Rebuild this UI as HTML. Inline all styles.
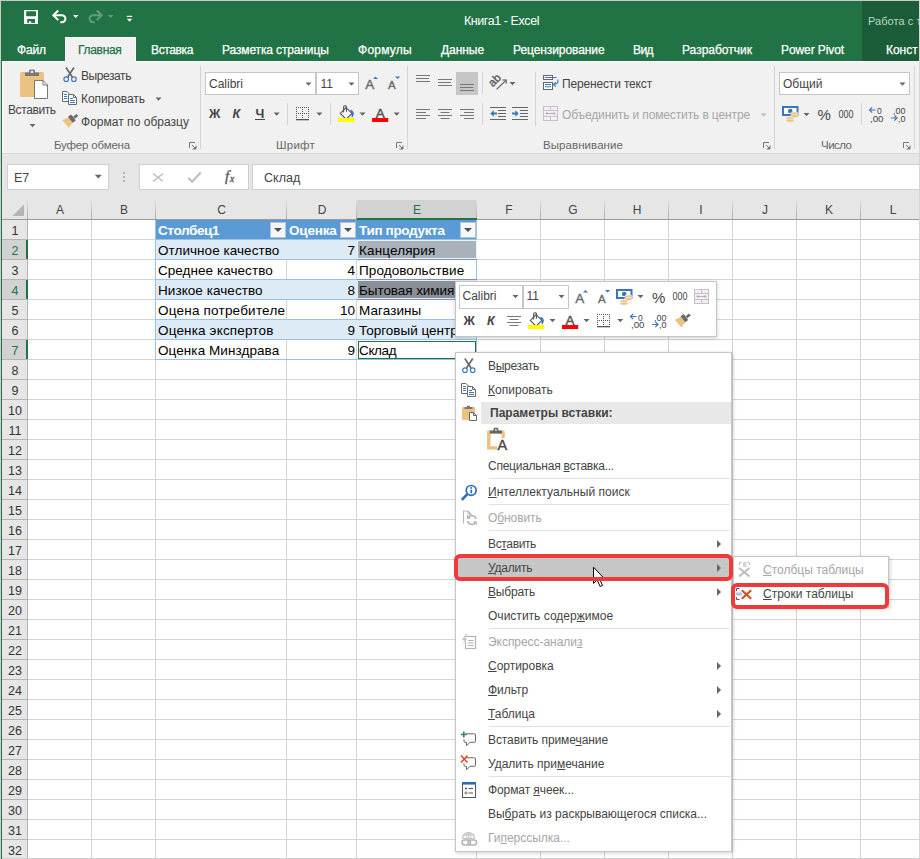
<!DOCTYPE html>
<html lang="ru"><head><meta charset="utf-8"><title>Книга1 - Excel</title>
<style>
*{box-sizing:border-box;margin:0;padding:0}
html,body{width:920px;height:859px;overflow:hidden;background:#fff}
body{font-family:"Liberation Sans",sans-serif;font-size:12px;color:#444;position:relative}
#app{position:absolute;left:0;top:0;width:920px;height:859px;overflow:hidden;background:#fff}
.a{position:absolute}
.t{position:absolute;white-space:nowrap;line-height:16px;height:16px}
.ui{font-size:12px;color:#444}
.w{color:#fff}
.tab{font-size:12px;color:#fff;-webkit-text-stroke:0.25px}
.grp{color:#666;font-size:11.5px}
.dis{color:#a6a6a6}
.cell{font-size:13.5px;color:#000;line-height:20px;height:20px}
.hdr{font-size:12px;color:#333;line-height:20px;height:20px;text-align:center}
.sep{position:absolute;width:1px;background:#d8d8d8}
.combo{position:absolute;background:#fff;border:1px solid #c6c6c6}
.arr{position:absolute;width:0;height:0;border-left:3px solid transparent;border-right:3px solid transparent;border-top:3px solid #666}
.mi{position:absolute;left:488px;font-size:12px;color:#444;white-space:nowrap;line-height:16px;height:16px}
.msep{position:absolute;left:489px;width:241px;height:1px;background:#e1e1e1}
.marr{position:absolute;left:717px;width:0;height:0;border-top:4px solid transparent;border-bottom:4px solid transparent;border-left:4px solid #666}
u{text-decoration:underline;text-underline-offset:1px}
</style></head>
<body><div id="app">
<div class="a" style="left:0px;top:0px;width:920px;height:61px;background:#217346;"></div>
<div class="a" style="left:862px;top:1px;width:58px;height:60px;background:#1a5d38;"></div>
<svg class="a" style="left:23px;top:9px" width="16" height="16" viewBox="0 0 16 16"><rect x="1" y="1" width="14" height="14" rx="0.600" fill="#fff"/><path d="M3.200 2.300h9.800v4l-0.800 0.900h-8.200l-0.800-0.900z" fill="#217346"/><rect x="4.200" y="10" width="7.800" height="3.900" fill="#217346"/><rect x="6.100" y="12.200" width="2" height="1.900" fill="#fff"/></svg>
<svg class="a" style="left:50px;top:7px" width="20" height="20" viewBox="0 0 20 20"><path d="M3.500 8.300h8.400a3.500 3.500 0 0 1 0 7h-1.600" fill="none" stroke="#fff" stroke-width="2"/><path d="M8.200 3.500l-4.800 4.800 4.800 4.800" fill="none" stroke="#fff" stroke-width="2"/></svg>
<svg class="a" style="left:72px;top:14px" width="8" height="5" viewBox="0 0 8 5"><path d="M1 1h5.400l-2.700 3z" fill="#fff"/></svg>
<svg class="a" style="left:85px;top:7px" width="20" height="20" viewBox="0 0 20 20"><g opacity="0.300"><path d="M16.500 8.300h-8.400a3.500 3.500 0 0 0 0 7h1.600" fill="none" stroke="#fff" stroke-width="2"/><path d="M11.800 3.500l4.800 4.800-4.800 4.800" fill="none" stroke="#fff" stroke-width="2"/></g></svg>
<svg class="a" style="left:107px;top:14px" width="8" height="5" viewBox="0 0 8 5"><path d="M1 1h5.400l-2.700 3z" fill="#fff" opacity="0.300"/></svg>
<svg class="a" style="left:126px;top:15px" width="8" height="8" viewBox="0 0 8 8"><rect x="0.800" y="0.800" width="5.400" height="1.200" fill="#fff"/><path d="M0.800 3.700h5.400l-2.700 3z" fill="#fff"/></svg>
<div class="t w" style="left:464px;top:13px;font-size:12.5px;letter-spacing:-0.431px;">Книга1 - Excel</div>
<div class="t w" style="left:868px;top:13px;font-size:11px;color:#bdd5c6;letter-spacing:0.055px;">Работа с т</div>
<div class="a" style="left:65px;top:37px;width:71px;height:24px;background:#f1f1f1;border:1px solid #fdfbfc;border-bottom:0"></div>
<div class="t tab" style="left:17px;top:41.5px;color:#fff;letter-spacing:-0.129px;">Файл</div>
<div class="t tab" style="left:78px;top:41.5px;color:#217346;letter-spacing:-0.312px;">Главная</div>
<div class="t tab" style="left:151px;top:41.5px;color:#fff;letter-spacing:-0.373px;">Вставка</div>
<div class="t tab" style="left:222px;top:41.5px;color:#fff;letter-spacing:-0.128px;">Разметка страницы</div>
<div class="t tab" style="left:358px;top:41.5px;color:#fff;letter-spacing:0.254px;">Формулы</div>
<div class="t tab" style="left:441px;top:41.5px;color:#fff;letter-spacing:-0.060px;">Данные</div>
<div class="t tab" style="left:513px;top:41.5px;color:#fff;letter-spacing:-0.084px;">Рецензирование</div>
<div class="t tab" style="left:633px;top:41.5px;color:#fff;letter-spacing:-0.573px;">Вид</div>
<div class="t tab" style="left:682px;top:41.5px;color:#fff;letter-spacing:0.001px;">Разработчик</div>
<div class="t tab" style="left:781px;top:41.5px;color:#fff;letter-spacing:-0.094px;">Power Pivot</div>
<div class="t tab" style="left:886px;top:41.5px;color:#fff;letter-spacing:-0.039px;">Конст</div>
<div class="a" style="left:1px;top:61px;width:919px;height:92px;background:#f1f1f1;"></div>
<div class="a" style="left:2px;top:61px;width:63px;height:1px;background:#fdfbfc;"></div>
<div class="a" style="left:136px;top:61px;width:783px;height:1px;background:#fdfbfc;"></div>
<div class="a" style="left:2px;top:61px;width:1px;height:92px;background:#fdfbfc;"></div>
<div class="a" style="left:66px;top:60px;width:69px;height:2px;background:#f1f1f1;"></div>
<div class="a" style="left:200px;top:66px;width:1px;height:83px;background:#d4d4d4;"></div>
<div class="a" style="left:407px;top:66px;width:1px;height:83px;background:#d4d4d4;"></div>
<div class="a" style="left:774px;top:66px;width:1px;height:83px;background:#d4d4d4;"></div>
<div class="a" style="left:914px;top:66px;width:1px;height:83px;background:#d4d4d4;"></div>
<div class="a" style="left:535px;top:72px;width:1px;height:54px;background:#d4d4d4;"></div>
<div class="t ui" style="left:8px;top:102px;;letter-spacing:-0.397px;">Вставить</div>
<div class="t ui" style="left:81px;top:68px;;letter-spacing:-0.422px;">Вырезать</div>
<div class="t ui" style="left:81px;top:91px;;letter-spacing:-0.062px;">Копировать</div>
<div class="t ui" style="left:81px;top:114px;;letter-spacing:0.023px;">Формат по образцу</div>
<div class="t grp" style="left:54px;top:137px;;letter-spacing:-0.180px;">Буфер обмена</div>
<div class="combo" style="left:205px;top:72px;width:111px;height:23px"></div><div class="combo" style="left:316px;top:72px;width:43px;height:23px"></div><div class="t ui" style="left:209px;top:76px;;">Calibri</div>
<div class="t ui" style="left:320.5px;top:76px;;">11</div>
<div class="t grp" style="left:276px;top:137px;;letter-spacing:0.231px;">Шрифт</div>
<div class="a" style="left:456px;top:72px;width:22px;height:23px;background:#c6c6c6;"></div>
<div class="t ui" style="left:562px;top:76px;;letter-spacing:-0.160px;">Перенести текст</div>
<div class="t ui dis" style="left:562px;top:107px;;letter-spacing:-0.124px;">Объединить и поместить в центре</div>
<div class="t grp" style="left:543px;top:137px;;letter-spacing:0.069px;">Выравнивание</div>
<div class="combo" style="left:779px;top:72px;width:131px;height:23px"></div><div class="t ui" style="left:783px;top:76px;;">Общий</div>
<div class="t grp" style="left:821px;top:137px;;letter-spacing:-0.536px;">Число</div>
<svg class="a" style="left:0;top:0" width="920" height="160" viewBox="0 0 920 160"><rect x="20" y="72" width="24" height="25" rx="1.5" fill="#eac282"/><path d="M25 76v-3.5h4v-1.6a1.4 1.4 0 0 1 1.4-1.4h3.2a1.4 1.4 0 0 1 1.4 1.4v1.6h4v3.5z" fill="#777"/><rect x="30.8" y="70.8" width="2.4" height="2.2" fill="#f1f1f1"/><path d="M34.5 80.5h8.5l4.5 4.5v13.5h-13z" fill="#fff" stroke="#777" stroke-width="1"/><path d="M43 80.5v4.5h4.5" fill="none" stroke="#777" stroke-width="1"/><path d="M29.5 124.0h6l-3 3.2z" fill="#666"/><path d="M66 67.5l6.3 9.5M74 67.5l-6.3 9.5" stroke="#6a6a6a" stroke-width="1.7" fill="none"/><circle cx="66.2" cy="79.2" r="2.3" fill="none" stroke="#3a76c0" stroke-width="1.1"/><circle cx="73.9" cy="79.2" r="2.3" fill="none" stroke="#3a76c0" stroke-width="1.1"/><path d="M62.5 91.5h4.5l2.5 2.5v7.5h-7z" fill="#fff" stroke="#6a6a6a" stroke-width="1"/><path d="M64 94.5h3M64 96.5h3M64 98.5h3" stroke="#3a76c0" stroke-width="1"/><path d="M68.5 94.5h5l3 3v7h-8z" fill="#fff" stroke="#6a6a6a" stroke-width="1"/><path d="M73.5 94.5v3h3" fill="none" stroke="#6a6a6a" stroke-width="1"/><path d="M70 98.5h3M70 100.5h5M70 102.5h5" stroke="#3a76c0" stroke-width="1"/><path d="M155.5 97.5h6l-3 3.2z" fill="#666"/><path d="M62.3 120.2l6.2-3 4.2 5.6-4 5z" fill="#eac282"/><path d="M68 116.8l3.2-2.4 4.6 6-3.2 2.4z" fill="#6a6a6a"/><path d="M73.2 116.6l3.4-2.6 1.6 2.1-3.4 2.6z" fill="#6a6a6a"/><path d="M189.5 148v-5.5h5.5" fill="none" stroke="#777" stroke-width="1"/><path d="M192 145l3.5 3.5M196 145.5v3.5h-3.5" fill="none" stroke="#777" stroke-width="1"/><rect x="194" y="147" width="2" height="2" fill="#777"/><path d="M305.5 82.5h6l-3 3.2z" fill="#666"/><path d="M348.5 82.5h6l-3 3.2z" fill="#666"/><text x="365.300" y="88.800" font-family="Liberation Sans,sans-serif" font-size="13.5" fill="#6a6a6a" stroke="#6a6a6a" stroke-width="0.400">A</text><path d="M373 79l2.5-2.6 2.5 2.6z" fill="#3a76c0"/><text x="388" y="88.800" font-family="Liberation Sans,sans-serif" font-size="11.5" fill="#6a6a6a" stroke="#6a6a6a" stroke-width="0.400">A</text><path d="M395 76.4h5.2l-2.6 2.6z" fill="#3a76c0"/><text x="209" y="118" font-family="Liberation Sans,sans-serif" font-size="12.5" font-weight="bold" fill="#444">Ж</text><text x="232.5" y="118" font-family="Liberation Sans,sans-serif" font-size="12.5" font-weight="bold" font-style="italic" fill="#444">К</text><text x="255.5" y="118" font-family="Liberation Sans,sans-serif" font-size="12.5" font-weight="bold" fill="#444">Ч</text><rect x="255" y="119" width="10" height="1" fill="#444"/><path d="M273.7 112.5h6l-3 3.2z" fill="#666"/><rect x="287" y="103" width="1" height="22" fill="#d4d4d4"/><rect x="330" y="103" width="1" height="22" fill="#d4d4d4"/><path d="M296.5 107v12M302.5 107v12M308.5 107v12M296 107.5h13M296 113.5h13" stroke="#555" stroke-width="1" stroke-dasharray="1 1" fill="none"/><rect x="296" y="119" width="13" height="1.3" fill="#555"/><path d="M316.4 112.5h6l-3 3.2z" fill="#666"/><path d="M346.1 107.6l5.800 5.800-5.800 5.800-5.800-5.800z" fill="#fff" stroke="#555" stroke-width="1.100"/><path d="M343.6 112.5v-5.300a1.400 1.400 0 0 1 2.800 -0.200v4.700" fill="none" stroke="#555" stroke-width="1.100"/><path d="M351.2 109.8c2.800 1.600 3.600 4.400 1.200 7.600l-0.900-0.200c0.600-3-0.100-4.800-1.700-6.200z" fill="#3a76c0"/><rect x="338" y="118" width="16.200" height="4" fill="#ffff00"/><path d="M359.5 112.5h6l-3 3.2z" fill="#666"/><text x="375.800" y="117.800" font-family="Liberation Sans,sans-serif" font-size="13.5" fill="#555" stroke="#555" stroke-width="0.500">A</text><rect x="372" y="118" width="16.200" height="4" fill="#ff0000"/><path d="M393.7 112.5h6l-3 3.2z" fill="#666"/><path d="M396.5 148v-5.5h5.5" fill="none" stroke="#777" stroke-width="1"/><path d="M399 145l3.5 3.5M403 145.5v3.5h-3.5" fill="none" stroke="#777" stroke-width="1"/><rect x="401" y="147" width="2" height="2" fill="#777"/><rect x="416" y="75" width="14" height="1" fill="#777"/><rect x="416" y="78" width="13" height="1" fill="#777"/><rect x="416" y="81" width="14" height="1" fill="#777"/><rect x="438" y="79" width="14" height="1" fill="#777"/><rect x="438" y="82" width="13" height="1" fill="#777"/><rect x="438" y="85" width="14" height="1" fill="#777"/><rect x="460" y="84" width="14" height="1" fill="#777"/><rect x="460" y="87" width="13" height="1" fill="#777"/><rect x="460" y="90" width="14" height="1" fill="#777"/><rect x="416" y="109" width="14" height="1" fill="#777"/><rect x="416" y="112" width="10" height="1" fill="#777"/><rect x="416" y="115" width="14" height="1" fill="#777"/><rect x="416" y="118" width="10" height="1" fill="#777"/><rect x="438" y="109" width="14" height="1" fill="#777"/><rect x="440.5" y="112" width="9" height="1" fill="#777"/><rect x="438" y="115" width="14" height="1" fill="#777"/><rect x="440.5" y="118" width="9" height="1" fill="#777"/><rect x="460" y="109" width="14" height="1" fill="#777"/><rect x="464" y="112" width="10" height="1" fill="#777"/><rect x="460" y="115" width="14" height="1" fill="#777"/><rect x="464" y="118" width="10" height="1" fill="#777"/><rect x="482" y="72" width="1" height="22" fill="#d4d4d4"/><rect x="482" y="103" width="1" height="22" fill="#d4d4d4"/><text transform="translate(492.800 87.400) rotate(-45)" font-family="Liberation Sans,sans-serif" font-size="11.5" fill="#4a4a4a" stroke="#4a4a4a" stroke-width="0.250">ab</text><path d="M496.600 89.300l9-8.600" stroke="#555" stroke-width="1.1" fill="none"/><path d="M502.400 80h3.800v3.800" stroke="#555" stroke-width="1.1" fill="none"/><path d="M509.5 82.0h6l-3 3.2z" fill="#666"/><rect x="543.5" y="75.500" width="9" height="4" fill="#fff" stroke="#666" stroke-width="1"/><rect x="543.5" y="82.500" width="9" height="7" fill="#fff" stroke="#666" stroke-width="1"/><path d="M545 77.500h11.500M545 84.500h6M545 86.700h6" stroke="#3a76c0" stroke-width="1.1"/><path d="M557.800 79.500c1 3.200-1 5-4.200 5M555.700 82.300l-2.400 2.200 2.400 2.200" fill="none" stroke="#3a76c0" stroke-width="1.1"/><rect x="490" y="107" width="16" height="1" fill="#666"/><rect x="498" y="110" width="8" height="1" fill="#666"/><rect x="498" y="113" width="8" height="1" fill="#666"/><rect x="498" y="116" width="8" height="1" fill="#666"/><rect x="490" y="119" width="16" height="1" fill="#666"/><path d="M490.3 113.5l3.400-3.300v2.300h3.300v2h-3.300v2.300z" fill="#3a76c0"/><rect x="512" y="107" width="16" height="1" fill="#666"/><rect x="520" y="110" width="8" height="1" fill="#666"/><rect x="520" y="113" width="8" height="1" fill="#666"/><rect x="520" y="116" width="8" height="1" fill="#666"/><rect x="512" y="119" width="16" height="1" fill="#666"/><path d="M518.7 113.5l-3.400-3.300v2.300h-3.300v2h3.300v2.300z" fill="#3a76c0"/><rect x="543.5" y="106.500" width="14" height="14" fill="#f4eff4" stroke="#c8c0c8" stroke-width="1"/><path d="M543.500 110.500h14M543.500 116.500h14M550.500 106.500v4M550.500 116.500v4" stroke="#c8c0c8" stroke-width="1" fill="none"/><path d="M546 113.500h9M547.500 112l-1.500 1.500 1.500 1.500M553.500 112l1.500 1.500-1.500 1.500" stroke="#b0a8b0" stroke-width="0.9" fill="none"/><path d="M760.5 113.5h6l-3 3.2z" fill="#bcbcbc"/><path d="M763.5 148v-5.5h5.5" fill="none" stroke="#777" stroke-width="1"/><path d="M766 145l3.5 3.5M770 145.5v3.5h-3.5" fill="none" stroke="#777" stroke-width="1"/><rect x="768" y="147" width="2" height="2" fill="#777"/><path d="M899.5 82.5h6l-3 3.2z" fill="#666"/><rect x="782" y="106" width="16.500" height="10" fill="#3a76c0"/><rect x="784" y="108" width="12.500" height="6" fill="#fff"/><circle cx="790.200" cy="111" r="2.300" fill="#3a76c0"/><ellipse cx="794.500" cy="113.500" rx="4" ry="1.600" fill="#eac282" stroke="#f1f1f1" stroke-width="0.600"/><ellipse cx="794.500" cy="116" rx="4" ry="1.600" fill="#eac282" stroke="#f1f1f1" stroke-width="0.600"/><ellipse cx="790" cy="118.200" rx="4" ry="1.600" fill="#eac282" stroke="#f1f1f1" stroke-width="0.600"/><ellipse cx="790" cy="120.600" rx="4" ry="1.600" fill="#eac282" stroke="#f1f1f1" stroke-width="0.600"/><path d="M803.5 113.0h6l-3 3.2z" fill="#666"/><text x="817.500" y="120" font-family="Liberation Sans,sans-serif" font-size="15" fill="#444">%</text><text x="838.500" y="117.500" font-family="Liberation Sans,sans-serif" font-size="10" fill="#444" textLength="15" lengthAdjust="spacingAndGlyphs">000</text><rect x="861" y="103" width="1" height="22" fill="#d4d4d4"/><path d="M869.5 110h6M872.2 107.300l-2.700 2.700 2.700 2.700" stroke="#3a76c0" stroke-width="1.200" fill="none"/><text x="877" y="114" font-family="Liberation Sans,sans-serif" font-size="8.500" fill="#444">0</text><text x="870" y="121.500" font-family="Liberation Sans,sans-serif" font-size="8.500" fill="#444" textLength="13.500" lengthAdjust="spacingAndGlyphs">,00</text><path d="M891 118h6M894.3 115.300l2.700 2.700-2.700 2.700" stroke="#3a76c0" stroke-width="1.200" fill="none"/><text x="893" y="114" font-family="Liberation Sans,sans-serif" font-size="8.500" fill="#444" textLength="12.500" lengthAdjust="spacingAndGlyphs">,00</text><text x="898" y="121.500" font-family="Liberation Sans,sans-serif" font-size="8.500" fill="#444" textLength="7.500" lengthAdjust="spacingAndGlyphs">,0</text><path d="M903.5 148v-5.5h5.5" fill="none" stroke="#777" stroke-width="1"/><path d="M906 145l3.5 3.5M910 145.5v3.5h-3.5" fill="none" stroke="#777" stroke-width="1"/><rect x="908" y="147" width="2" height="2" fill="#777"/></svg>
<div class="a" style="left:1px;top:153px;width:919px;height:67px;background:#e6e6e6;"></div>
<div class="a" style="left:1px;top:153px;width:919px;height:1px;background:#dadada;"></div>
<div class="combo" style="left:7px;top:164px;width:102px;height:26px;border-color:#d0d0d0"></div><div class="t ui" style="left:14px;top:170px;font-size:12.5px;">E7</div>
<div class="combo" style="left:139px;top:164px;width:110px;height:26px;border-color:#d0d0d0"></div><div class="combo" style="left:252px;top:164px;width:668px;height:26px;border-color:#d0d0d0"></div><div class="t ui" style="left:264px;top:170px;font-size:12.5px;">Склад</div>
<svg class="a" style="left:0;top:160px" width="920" height="40" viewBox="0 160 920 40"><path d="M94.800 174.800h7l-3.500 3.600z" fill="#666"/><rect x="123" y="172" width="2" height="2" fill="#b4b4b4"/><rect x="123" y="176" width="2" height="2" fill="#b4b4b4"/><rect x="123" y="180" width="2" height="2" fill="#b4b4b4"/><path d="M153 173.500l10 8M163 173.500l-10 8" stroke="#bdbdbd" stroke-width="1.600" fill="none"/><path d="M188.300 178l3.800 3.800 8.600-9.300" stroke="#bdbdbd" stroke-width="2" fill="none"/><text x="225" y="181" font-family="Liberation Serif,serif" font-size="15" font-style="italic" fill="#555" stroke="#555" stroke-width="0.300">f</text><text x="230" y="181.800" font-family="Liberation Serif,serif" font-size="9.500" font-style="italic" fill="#555" stroke="#555" stroke-width="0.300">x</text></svg>
<div class="a" style="left:2px;top:220px;width:918px;height:639px;background:#fff;"></div>
<div class="a" style="left:2px;top:200px;width:918px;height:19px;background:#e6e6e6;"></div>
<div class="a" style="left:357px;top:200px;width:120px;height:19px;background:#d2d2d2;"></div>
<div class="a" style="left:357px;top:218px;width:120px;height:2px;background:#217346;"></div>
<div class="t hdr" style="left:28px;top:200px;width:64px;color:#444">A</div>
<div class="a" style="left:27px;top:200px;width:1px;height:20px;background:linear-gradient(#e0e0e0,#a8a8a8)"></div>
<div class="t hdr" style="left:92px;top:200px;width:64px;color:#444">B</div>
<div class="a" style="left:91px;top:200px;width:1px;height:20px;background:linear-gradient(#e0e0e0,#a8a8a8)"></div>
<div class="t hdr" style="left:156px;top:200px;width:131px;color:#444">C</div>
<div class="a" style="left:155px;top:200px;width:1px;height:20px;background:linear-gradient(#e0e0e0,#a8a8a8)"></div>
<div class="t hdr" style="left:287px;top:200px;width:70px;color:#444">D</div>
<div class="a" style="left:286px;top:200px;width:1px;height:20px;background:linear-gradient(#e0e0e0,#a8a8a8)"></div>
<div class="t hdr" style="left:357px;top:200px;width:120px;color:#217346">E</div>
<div class="a" style="left:356px;top:200px;width:1px;height:20px;background:linear-gradient(#e0e0e0,#a8a8a8)"></div>
<div class="t hdr" style="left:477px;top:200px;width:64px;color:#444">F</div>
<div class="a" style="left:476px;top:200px;width:1px;height:20px;background:linear-gradient(#e0e0e0,#a8a8a8)"></div>
<div class="t hdr" style="left:541px;top:200px;width:64px;color:#444">G</div>
<div class="a" style="left:540px;top:200px;width:1px;height:20px;background:linear-gradient(#e0e0e0,#a8a8a8)"></div>
<div class="t hdr" style="left:605px;top:200px;width:64px;color:#444">H</div>
<div class="a" style="left:604px;top:200px;width:1px;height:20px;background:linear-gradient(#e0e0e0,#a8a8a8)"></div>
<div class="t hdr" style="left:669px;top:200px;width:64px;color:#444">I</div>
<div class="a" style="left:668px;top:200px;width:1px;height:20px;background:linear-gradient(#e0e0e0,#a8a8a8)"></div>
<div class="t hdr" style="left:733px;top:200px;width:64px;color:#444">J</div>
<div class="a" style="left:732px;top:200px;width:1px;height:20px;background:linear-gradient(#e0e0e0,#a8a8a8)"></div>
<div class="t hdr" style="left:797px;top:200px;width:64px;color:#444">K</div>
<div class="a" style="left:796px;top:200px;width:1px;height:20px;background:linear-gradient(#e0e0e0,#a8a8a8)"></div>
<div class="t hdr" style="left:861px;top:200px;width:64px;color:#444">L</div>
<div class="a" style="left:860px;top:200px;width:1px;height:20px;background:linear-gradient(#e0e0e0,#a8a8a8)"></div>
<div class="a" style="left:2px;top:219px;width:918px;height:1px;background:#9b9b9b;"></div>
<div class="a" style="left:357px;top:218px;width:120px;height:2px;background:#217346;"></div>
<svg class="a" style="left:12px;top:204px" width="12" height="12" viewBox="0 0 12 12"><path d="M0.5 12L12 0.5V12z" fill="#b4b4b4"/></svg>
<div class="a" style="left:2px;top:220px;width:25px;height:639px;background:#e6e6e6;"></div>
<div class="a" style="left:27px;top:220px;width:1px;height:639px;background:#b1b1b1;"></div>
<div class="t hdr" style="left:2px;top:221px;width:26px;font-size:12.5px;color:#333">1</div>
<div class="a" style="left:2px;top:239px;width:25px;height:1px;background:#b4b4b4;"></div>
<div class="a" style="left:2px;top:240px;width:25px;height:19px;background:#d2d2d2;"></div>
<div class="a" style="left:26px;top:240px;width:2px;height:19px;background:#217346;"></div>
<div class="t hdr" style="left:2px;top:241px;width:26px;font-size:12.5px;color:#217346">2</div>
<div class="a" style="left:2px;top:259px;width:25px;height:1px;background:#b4b4b4;"></div>
<div class="t hdr" style="left:2px;top:261px;width:26px;font-size:12.5px;color:#333">3</div>
<div class="a" style="left:2px;top:279px;width:25px;height:1px;background:#b4b4b4;"></div>
<div class="a" style="left:2px;top:280px;width:25px;height:19px;background:#d2d2d2;"></div>
<div class="a" style="left:26px;top:280px;width:2px;height:19px;background:#217346;"></div>
<div class="t hdr" style="left:2px;top:281px;width:26px;font-size:12.5px;color:#217346">4</div>
<div class="a" style="left:2px;top:299px;width:25px;height:1px;background:#b4b4b4;"></div>
<div class="t hdr" style="left:2px;top:301px;width:26px;font-size:12.5px;color:#333">5</div>
<div class="a" style="left:2px;top:319px;width:25px;height:1px;background:#b4b4b4;"></div>
<div class="t hdr" style="left:2px;top:321px;width:26px;font-size:12.5px;color:#333">6</div>
<div class="a" style="left:2px;top:339px;width:25px;height:1px;background:#b4b4b4;"></div>
<div class="a" style="left:2px;top:340px;width:25px;height:19px;background:#d2d2d2;"></div>
<div class="a" style="left:26px;top:340px;width:2px;height:19px;background:#217346;"></div>
<div class="t hdr" style="left:2px;top:341px;width:26px;font-size:12.5px;color:#217346">7</div>
<div class="a" style="left:2px;top:359px;width:25px;height:1px;background:#b4b4b4;"></div>
<div class="t hdr" style="left:2px;top:361px;width:26px;font-size:12.5px;color:#333">8</div>
<div class="a" style="left:2px;top:379px;width:25px;height:1px;background:#b4b4b4;"></div>
<div class="t hdr" style="left:2px;top:381px;width:26px;font-size:12.5px;color:#333">9</div>
<div class="a" style="left:2px;top:399px;width:25px;height:1px;background:#b4b4b4;"></div>
<div class="t hdr" style="left:2px;top:401px;width:26px;font-size:12.5px;color:#333">10</div>
<div class="a" style="left:2px;top:419px;width:25px;height:1px;background:#b4b4b4;"></div>
<div class="t hdr" style="left:2px;top:421px;width:26px;font-size:12.5px;color:#333">11</div>
<div class="a" style="left:2px;top:439px;width:25px;height:1px;background:#b4b4b4;"></div>
<div class="t hdr" style="left:2px;top:441px;width:26px;font-size:12.5px;color:#333">12</div>
<div class="a" style="left:2px;top:459px;width:25px;height:1px;background:#b4b4b4;"></div>
<div class="t hdr" style="left:2px;top:461px;width:26px;font-size:12.5px;color:#333">13</div>
<div class="a" style="left:2px;top:479px;width:25px;height:1px;background:#b4b4b4;"></div>
<div class="t hdr" style="left:2px;top:481px;width:26px;font-size:12.5px;color:#333">14</div>
<div class="a" style="left:2px;top:499px;width:25px;height:1px;background:#b4b4b4;"></div>
<div class="t hdr" style="left:2px;top:501px;width:26px;font-size:12.5px;color:#333">15</div>
<div class="a" style="left:2px;top:519px;width:25px;height:1px;background:#b4b4b4;"></div>
<div class="t hdr" style="left:2px;top:521px;width:26px;font-size:12.5px;color:#333">16</div>
<div class="a" style="left:2px;top:539px;width:25px;height:1px;background:#b4b4b4;"></div>
<div class="t hdr" style="left:2px;top:541px;width:26px;font-size:12.5px;color:#333">17</div>
<div class="a" style="left:2px;top:559px;width:25px;height:1px;background:#b4b4b4;"></div>
<div class="t hdr" style="left:2px;top:561px;width:26px;font-size:12.5px;color:#333">18</div>
<div class="a" style="left:2px;top:579px;width:25px;height:1px;background:#b4b4b4;"></div>
<div class="t hdr" style="left:2px;top:581px;width:26px;font-size:12.5px;color:#333">19</div>
<div class="a" style="left:2px;top:599px;width:25px;height:1px;background:#b4b4b4;"></div>
<div class="t hdr" style="left:2px;top:601px;width:26px;font-size:12.5px;color:#333">20</div>
<div class="a" style="left:2px;top:619px;width:25px;height:1px;background:#b4b4b4;"></div>
<div class="t hdr" style="left:2px;top:621px;width:26px;font-size:12.5px;color:#333">21</div>
<div class="a" style="left:2px;top:639px;width:25px;height:1px;background:#b4b4b4;"></div>
<div class="t hdr" style="left:2px;top:641px;width:26px;font-size:12.5px;color:#333">22</div>
<div class="a" style="left:2px;top:659px;width:25px;height:1px;background:#b4b4b4;"></div>
<div class="t hdr" style="left:2px;top:661px;width:26px;font-size:12.5px;color:#333">23</div>
<div class="a" style="left:2px;top:679px;width:25px;height:1px;background:#b4b4b4;"></div>
<div class="t hdr" style="left:2px;top:681px;width:26px;font-size:12.5px;color:#333">24</div>
<div class="a" style="left:2px;top:699px;width:25px;height:1px;background:#b4b4b4;"></div>
<div class="t hdr" style="left:2px;top:701px;width:26px;font-size:12.5px;color:#333">25</div>
<div class="a" style="left:2px;top:719px;width:25px;height:1px;background:#b4b4b4;"></div>
<div class="t hdr" style="left:2px;top:721px;width:26px;font-size:12.5px;color:#333">26</div>
<div class="a" style="left:2px;top:739px;width:25px;height:1px;background:#b4b4b4;"></div>
<div class="t hdr" style="left:2px;top:741px;width:26px;font-size:12.5px;color:#333">27</div>
<div class="a" style="left:2px;top:759px;width:25px;height:1px;background:#b4b4b4;"></div>
<div class="t hdr" style="left:2px;top:761px;width:26px;font-size:12.5px;color:#333">28</div>
<div class="a" style="left:2px;top:779px;width:25px;height:1px;background:#b4b4b4;"></div>
<div class="t hdr" style="left:2px;top:781px;width:26px;font-size:12.5px;color:#333">29</div>
<div class="a" style="left:2px;top:799px;width:25px;height:1px;background:#b4b4b4;"></div>
<div class="t hdr" style="left:2px;top:801px;width:26px;font-size:12.5px;color:#333">30</div>
<div class="a" style="left:2px;top:819px;width:25px;height:1px;background:#b4b4b4;"></div>
<div class="t hdr" style="left:2px;top:821px;width:26px;font-size:12.5px;color:#333">31</div>
<div class="a" style="left:2px;top:839px;width:25px;height:1px;background:#b4b4b4;"></div>
<div class="t hdr" style="left:2px;top:841px;width:26px;font-size:12.5px;color:#333">32</div>
<div class="a" style="left:2px;top:859px;width:25px;height:1px;background:#b4b4b4;"></div>
<div class="a" style="left:28px;top:239px;width:892px;height:1px;background:#d4d4d4;"></div>
<div class="a" style="left:28px;top:259px;width:892px;height:1px;background:#d4d4d4;"></div>
<div class="a" style="left:28px;top:279px;width:892px;height:1px;background:#d4d4d4;"></div>
<div class="a" style="left:28px;top:299px;width:892px;height:1px;background:#d4d4d4;"></div>
<div class="a" style="left:28px;top:319px;width:892px;height:1px;background:#d4d4d4;"></div>
<div class="a" style="left:28px;top:339px;width:892px;height:1px;background:#d4d4d4;"></div>
<div class="a" style="left:28px;top:359px;width:892px;height:1px;background:#d4d4d4;"></div>
<div class="a" style="left:28px;top:379px;width:892px;height:1px;background:#d4d4d4;"></div>
<div class="a" style="left:28px;top:399px;width:892px;height:1px;background:#d4d4d4;"></div>
<div class="a" style="left:28px;top:419px;width:892px;height:1px;background:#d4d4d4;"></div>
<div class="a" style="left:28px;top:439px;width:892px;height:1px;background:#d4d4d4;"></div>
<div class="a" style="left:28px;top:459px;width:892px;height:1px;background:#d4d4d4;"></div>
<div class="a" style="left:28px;top:479px;width:892px;height:1px;background:#d4d4d4;"></div>
<div class="a" style="left:28px;top:499px;width:892px;height:1px;background:#d4d4d4;"></div>
<div class="a" style="left:28px;top:519px;width:892px;height:1px;background:#d4d4d4;"></div>
<div class="a" style="left:28px;top:539px;width:892px;height:1px;background:#d4d4d4;"></div>
<div class="a" style="left:28px;top:559px;width:892px;height:1px;background:#d4d4d4;"></div>
<div class="a" style="left:28px;top:579px;width:892px;height:1px;background:#d4d4d4;"></div>
<div class="a" style="left:28px;top:599px;width:892px;height:1px;background:#d4d4d4;"></div>
<div class="a" style="left:28px;top:619px;width:892px;height:1px;background:#d4d4d4;"></div>
<div class="a" style="left:28px;top:639px;width:892px;height:1px;background:#d4d4d4;"></div>
<div class="a" style="left:28px;top:659px;width:892px;height:1px;background:#d4d4d4;"></div>
<div class="a" style="left:28px;top:679px;width:892px;height:1px;background:#d4d4d4;"></div>
<div class="a" style="left:28px;top:699px;width:892px;height:1px;background:#d4d4d4;"></div>
<div class="a" style="left:28px;top:719px;width:892px;height:1px;background:#d4d4d4;"></div>
<div class="a" style="left:28px;top:739px;width:892px;height:1px;background:#d4d4d4;"></div>
<div class="a" style="left:28px;top:759px;width:892px;height:1px;background:#d4d4d4;"></div>
<div class="a" style="left:28px;top:779px;width:892px;height:1px;background:#d4d4d4;"></div>
<div class="a" style="left:28px;top:799px;width:892px;height:1px;background:#d4d4d4;"></div>
<div class="a" style="left:28px;top:819px;width:892px;height:1px;background:#d4d4d4;"></div>
<div class="a" style="left:28px;top:839px;width:892px;height:1px;background:#d4d4d4;"></div>
<div class="a" style="left:28px;top:859px;width:892px;height:1px;background:#d4d4d4;"></div>
<div class="a" style="left:91px;top:220px;width:1px;height:639px;background:#d4d4d4;"></div>
<div class="a" style="left:155px;top:220px;width:1px;height:639px;background:#d4d4d4;"></div>
<div class="a" style="left:286px;top:220px;width:1px;height:639px;background:#d4d4d4;"></div>
<div class="a" style="left:356px;top:220px;width:1px;height:639px;background:#d4d4d4;"></div>
<div class="a" style="left:476px;top:220px;width:1px;height:639px;background:#d4d4d4;"></div>
<div class="a" style="left:540px;top:220px;width:1px;height:639px;background:#d4d4d4;"></div>
<div class="a" style="left:604px;top:220px;width:1px;height:639px;background:#d4d4d4;"></div>
<div class="a" style="left:668px;top:220px;width:1px;height:639px;background:#d4d4d4;"></div>
<div class="a" style="left:732px;top:220px;width:1px;height:639px;background:#d4d4d4;"></div>
<div class="a" style="left:796px;top:220px;width:1px;height:639px;background:#d4d4d4;"></div>
<div class="a" style="left:860px;top:220px;width:1px;height:639px;background:#d4d4d4;"></div>
<div class="a" style="left:924px;top:220px;width:1px;height:639px;background:#d4d4d4;"></div>
<div class="a" style="left:156px;top:220px;width:321px;height:19px;background:#5b9bd5;"></div>
<div class="a" style="left:156px;top:240px;width:321px;height:19px;background:#ddebf7;"></div>
<div class="a" style="left:156px;top:280px;width:321px;height:19px;background:#ddebf7;"></div>
<div class="a" style="left:156px;top:320px;width:321px;height:19px;background:#ddebf7;"></div>
<div class="a" style="left:156px;top:260px;width:321px;height:19px;background:#fff;"></div>
<div class="a" style="left:286px;top:260px;width:1px;height:19px;background:#d4d4d4;"></div>
<div class="a" style="left:356px;top:260px;width:1px;height:19px;background:#d4d4d4;"></div>
<div class="a" style="left:156px;top:300px;width:321px;height:19px;background:#fff;"></div>
<div class="a" style="left:286px;top:300px;width:1px;height:19px;background:#d4d4d4;"></div>
<div class="a" style="left:356px;top:300px;width:1px;height:19px;background:#d4d4d4;"></div>
<div class="a" style="left:156px;top:340px;width:321px;height:19px;background:#fff;"></div>
<div class="a" style="left:286px;top:340px;width:1px;height:19px;background:#d4d4d4;"></div>
<div class="a" style="left:356px;top:340px;width:1px;height:19px;background:#d4d4d4;"></div>
<div class="a" style="left:155px;top:239px;width:322px;height:1px;background:#9bc2e6;"></div>
<div class="a" style="left:155px;top:259px;width:322px;height:1px;background:#9bc2e6;"></div>
<div class="a" style="left:155px;top:279px;width:322px;height:1px;background:#9bc2e6;"></div>
<div class="a" style="left:155px;top:299px;width:322px;height:1px;background:#9bc2e6;"></div>
<div class="a" style="left:155px;top:319px;width:322px;height:1px;background:#9bc2e6;"></div>
<div class="a" style="left:155px;top:339px;width:322px;height:1px;background:#9bc2e6;"></div>
<div class="a" style="left:155px;top:359px;width:322px;height:1px;background:#9bc2e6;"></div>
<div class="a" style="left:155px;top:220px;width:1px;height:140px;background:#9bc2e6;"></div>
<div class="a" style="left:476px;top:220px;width:1px;height:140px;background:#9bc2e6;"></div>
<div class="a" style="left:358px;top:241px;width:118px;height:17px;background:#a9b1bb;outline:1px solid #eef2f7"></div>
<div class="a" style="left:357px;top:259px;width:120px;height:1px;background:#7d95b0;"></div>
<div class="a" style="left:358px;top:281px;width:118px;height:17px;background:#8a8f97;outline:1px solid #e6ebf2"></div>
<div class="a" style="left:357px;top:279px;width:120px;height:1px;background:#7d95b0;"></div>
<div class="a" style="left:357px;top:299px;width:120px;height:1px;background:#7d95b0;"></div>
<div class="a" style="left:357px;top:340px;width:120px;height:20px;background:#fff;border:1px solid #217346;box-shadow:inset 0 0 0 1px #fff, inset 0 0 0 2px #217346;display:none"></div>
<div class="a" style="left:358px;top:341px;width:118px;height:18px;border:1px solid #217346"></div><div class="t cell" style="left:158px;top:221px;color:#fff;font-weight:bold;letter-spacing:-0.382px;">Столбец1</div>
<div class="t cell" style="left:289px;top:221px;color:#fff;font-weight:bold;letter-spacing:-0.206px;">Оценка</div>
<div class="t cell" style="left:359px;top:221px;color:#fff;font-weight:bold;letter-spacing:-0.328px;">Тип продукта</div>
<div class="a" style="left:270px;top:222px;width:16px;height:16px;background:#f4f6f9;border:1px solid #b8c4d0"></div><div class="arr" style="left:274px;top:228px;border-left-width:4px;border-right-width:4px;border-top-width:4px;border-top-color:#505050"></div><div class="a" style="left:340px;top:222px;width:16px;height:16px;background:#f4f6f9;border:1px solid #b8c4d0"></div><div class="arr" style="left:344px;top:228px;border-left-width:4px;border-right-width:4px;border-top-width:4px;border-top-color:#505050"></div><div class="a" style="left:460px;top:222px;width:16px;height:16px;background:#f4f6f9;border:1px solid #b8c4d0"></div><div class="arr" style="left:464px;top:228px;border-left-width:4px;border-right-width:4px;border-top-width:4px;border-top-color:#505050"></div><div class="t cell" style="left:158px;top:241px;;letter-spacing:0.048px;">Отличное качество</div>
<div class="t cell" style="left:287px;top:241px;width:68px;text-align:right">7</div>
<div class="t cell" style="left:359px;top:241px;;letter-spacing:0.138px;">Канцелярия</div>
<div class="t cell" style="left:158px;top:261px;;letter-spacing:0.050px;">Среднее качество</div>
<div class="t cell" style="left:287px;top:261px;width:68px;text-align:right">4</div>
<div class="t cell" style="left:359px;top:261px;;letter-spacing:0.085px;">Продовольствие</div>
<div class="t cell" style="left:158px;top:281px;;letter-spacing:0.058px;">Низкое качество</div>
<div class="t cell" style="left:287px;top:281px;width:68px;text-align:right">8</div>
<div class="t cell" style="left:359px;top:281px;;letter-spacing:-0.063px;">Бытовая химия</div>
<div class="t cell" style="left:158px;top:301px;;letter-spacing:0.210px;">Оцена потребителе</div>
<div class="t cell" style="left:287px;top:301px;width:68px;text-align:right">10</div>
<div class="t cell" style="left:359px;top:301px;;letter-spacing:0.065px;">Магазины</div>
<div class="t cell" style="left:158px;top:321px;;letter-spacing:0.159px;">Оценка экспертов</div>
<div class="t cell" style="left:287px;top:321px;width:68px;text-align:right">9</div>
<div class="t cell" style="left:359px;top:321px;;">Торговый центр</div>
<div class="t cell" style="left:158px;top:341px;;letter-spacing:0.076px;">Оценка Минздрава</div>
<div class="t cell" style="left:287px;top:341px;width:68px;text-align:right">9</div>
<div class="t cell" style="left:359px;top:341px;;letter-spacing:-0.356px;">Склад</div>
<div class="a" style="left:455px;top:281px;width:262px;height:56px;background:#fff;border:1px solid #c6c6c6;box-shadow:0 1px 4px rgba(0,0,0,.2)"></div><div class="combo" style="left:459px;top:285px;width:64px;height:24px"></div><div class="combo" style="left:523px;top:285px;width:46px;height:24px"></div><div class="t ui" style="left:462.5px;top:287.5px;;">Calibri</div>
<div class="t ui" style="left:526.5px;top:287.5px;;">11</div>
<div class="a" style="left:455px;top:352px;width:277px;height:500px;background:#fff;border:1px solid #c6c6c6;box-shadow:1px 1px 4px rgba(0,0,0,.2)"></div><div class="a" style="left:481px;top:402px;width:250px;height:22px;background:#e8e8e8;"></div>
<div class="a" style="left:733px;top:556px;width:156px;height:52px;background:#fff;border:1px solid #c6c6c6;box-shadow:1px 1px 4px rgba(0,0,0,.2)"></div><div class="a" style="left:456px;top:556px;width:275px;height:24px;background:#c6c6c6;"></div>
<div class="mi" style="top:357.6px;letter-spacing:-0.311px;">В<u>ы</u>резать</div>
<div class="mi" style="top:381.6px;letter-spacing:0.017px;"><u>К</u>опировать</div>
<div class="mi" style="top:457.6px;letter-spacing:-0.247px;">Специальная <u>в</u>ставка...</div>
<div class="mi" style="top:483.6px;letter-spacing:0.050px;"><u>И</u>нтеллектуальный поиск</div>
<div class="mi" style="top:509.6px;color:#a6a6a6;letter-spacing:-0.082px;">О<u>б</u>новить</div>
<div class="mi" style="top:535.6px;letter-spacing:-0.361px;">Вс<u>т</u>авить</div>
<div class="mi" style="top:559.6px;letter-spacing:-0.218px;"><u>У</u>далить</div>
<div class="mi" style="top:583.6px;letter-spacing:-0.194px;"><u>В</u>ыбрать</div>
<div class="mi" style="top:607.6px;letter-spacing:0.020px;">Очистить содер<u>ж</u>имое</div>
<div class="mi" style="top:633.6px;color:#a6a6a6;letter-spacing:-0.043px;">Экспресс-анали<u>з</u></div>
<div class="mi" style="top:657.6px;letter-spacing:-0.017px;"><u>С</u>ортировка</div>
<div class="mi" style="top:681.6px;letter-spacing:-0.021px;"><u>Ф</u>ильтр</div>
<div class="mi" style="top:705.6px;letter-spacing:-0.009px;"><u>Т</u>аблица</div>
<div class="mi" style="top:731.6px;letter-spacing:-0.082px;">Вставить приме<u>ч</u>ание</div>
<div class="mi" style="top:755.6px;letter-spacing:-0.011px;">Удалить при<u>м</u>ечание</div>
<div class="mi" style="top:781.6px;letter-spacing:-0.089px;">Формат <u>я</u>чеек...</div>
<div class="mi" style="top:805.6px;letter-spacing:-0.013px;">Вы<u>б</u>рать из раскрывающегося списка...</div>
<div class="mi" style="top:829.6px;color:#a6a6a6;letter-spacing:-0.022px;">Ги<u>п</u>ерссылка...</div>
<div class="mi" style="left:490px;top:405px;font-weight:bold;color:#444">Параметры вставки:</div>
<div class="msep" style="top:478px"></div><div class="msep" style="top:504px"></div><div class="msep" style="top:530px"></div><div class="msep" style="top:628px"></div><div class="msep" style="top:726px"></div><div class="msep" style="top:776px"></div><div class="marr" style="top:540px"></div><div class="marr" style="top:564px"></div><div class="marr" style="top:588px"></div><div class="marr" style="top:662px"></div><div class="marr" style="top:686px"></div><div class="marr" style="top:710px"></div><div class="mi" style="left:763px;top:562px;color:#a6a6a6"><u>С</u>толбцы таблицы</div>
<div class="mi" style="left:763px;top:586px"><u>С</u>троки таблицы</div>
<svg class="a" style="left:0;top:270px" width="920" height="589" viewBox="0 270 920 589"><path d="M512.5 295.0h6l-3 3.2z" fill="#666"/><path d="M558.5 295.0h6l-3 3.2z" fill="#666"/><text x="575.300" y="302.800" font-family="Liberation Sans,sans-serif" font-size="13.5" fill="#6a6a6a" stroke="#6a6a6a" stroke-width="0.400">A</text><path d="M583 292.600l2.500-2.600 2.500 2.600z" fill="#3a76c0"/><text x="598" y="302.800" font-family="Liberation Sans,sans-serif" font-size="11.5" fill="#6a6a6a" stroke="#6a6a6a" stroke-width="0.400">A</text><path d="M605 290h5.200l-2.600 2.600z" fill="#3a76c0"/><rect x="616" y="289" width="16.500" height="10" fill="#3a76c0"/><rect x="618" y="291" width="12.500" height="6" fill="#fff"/><circle cx="624.2" cy="294" r="2.300" fill="#3a76c0"/><ellipse cx="628.5" cy="296.5" rx="4" ry="1.600" fill="#eac282" stroke="#fff" stroke-width="0.600"/><ellipse cx="628.5" cy="299" rx="4" ry="1.600" fill="#eac282" stroke="#fff" stroke-width="0.600"/><ellipse cx="624" cy="301.2" rx="4" ry="1.600" fill="#eac282" stroke="#fff" stroke-width="0.600"/><ellipse cx="624" cy="303.6" rx="4" ry="1.600" fill="#eac282" stroke="#fff" stroke-width="0.600"/><path d="M637.5 295.0h6l-3 3.2z" fill="#666"/><text x="652" y="303.400" font-family="Liberation Sans,sans-serif" font-size="15" fill="#444">%</text><text x="672.500" y="300.300" font-family="Liberation Sans,sans-serif" font-size="10" fill="#444" textLength="15" lengthAdjust="spacingAndGlyphs">000</text><rect x="694.5" y="289.5" width="14" height="14" fill="#f4eff4" stroke="#c8c0c8" stroke-width="1"/><path d="M694.5 293.5h14M694.5 299.5h14M701.5 289.5v4M701.5 299.5v4" stroke="#c8c0c8" stroke-width="1" fill="none"/><path d="M697 296.5h9M698.5 295l-1.500 1.500 1.500 1.500M704.5 295l1.500 1.500-1.500 1.500" stroke="#b0a8b0" stroke-width="0.900" fill="none"/><text x="463.500" y="325" font-family="Liberation Sans,sans-serif" font-size="12.5" font-weight="bold" fill="#444">Ж</text><text x="487" y="325" font-family="Liberation Sans,sans-serif" font-size="12.5" font-weight="bold" font-style="italic" fill="#444">К</text><rect x="507" y="316" width="14" height="1" fill="#777"/><rect x="509.5" y="319" width="9" height="1" fill="#777"/><rect x="507" y="322" width="14" height="1" fill="#777"/><rect x="509.5" y="325" width="9" height="1" fill="#777"/><path d="M536.1 314.6l5.800 5.800-5.800 5.800-5.800-5.800z" fill="#fff" stroke="#555" stroke-width="1.100"/><path d="M533.6 319.5v-5.300a1.400 1.400 0 0 1 2.800 -0.200v4.700" fill="none" stroke="#555" stroke-width="1.100"/><path d="M541.2 316.8c2.800 1.600 3.600 4.400 1.200 7.600l-0.900-0.200c0.600-3-0.100-4.800-1.700-6.200z" fill="#3a76c0"/><rect x="528" y="325" width="16.200" height="4" fill="#ffff00"/><path d="M549.5 319.0h6l-3 3.2z" fill="#666"/><text x="565.600" y="324.800" font-family="Liberation Sans,sans-serif" font-size="13.5" fill="#555" stroke="#555" stroke-width="0.500">A</text><rect x="562" y="325" width="16.200" height="4" fill="#ff0000"/><path d="M583.5 319.0h6l-3 3.2z" fill="#666"/><path d="M597.5 314v12M603.5 314v12M609.5 314v12M597 314.5h13M597 320.5h13" stroke="#555" stroke-width="1" stroke-dasharray="1 1" fill="none"/><rect x="597" y="326" width="13" height="1.300" fill="#555"/><path d="M617.3 319.0h6l-3 3.2z" fill="#666"/><path d="M630.5 316.5h6M633.2 313.8l-2.700 2.700 2.700 2.700" stroke="#3a76c0" stroke-width="1.200" fill="none"/><text x="638" y="320.5" font-family="Liberation Sans,sans-serif" font-size="8.500" fill="#444">0</text><text x="631" y="328.0" font-family="Liberation Sans,sans-serif" font-size="8.500" fill="#444" textLength="13.500" lengthAdjust="spacingAndGlyphs">,00</text><path d="M652 324.5h6M655.3 321.8l2.700 2.700-2.700 2.700" stroke="#3a76c0" stroke-width="1.200" fill="none"/><text x="654" y="320.5" font-family="Liberation Sans,sans-serif" font-size="8.500" fill="#444" textLength="12.500" lengthAdjust="spacingAndGlyphs">,00</text><text x="659" y="328.0" font-family="Liberation Sans,sans-serif" font-size="8.500" fill="#444" textLength="7.500" lengthAdjust="spacingAndGlyphs">,0</text><path d="M674.8 319.7l6.200-3 4.200 5.600-4 5z" fill="#eac282"/><path d="M680.5 316.3l3.200-2.400 4.600 6-3.200 2.400z" fill="#6a6a6a"/><path d="M685.7 316.1l3.400-2.600 1.600 2.100-3.400 2.600z" fill="#6a6a6a"/><path d="M464.8 358.5l6.300 9.500M472.8 358.5l-6.300 9.500" stroke="#6a6a6a" stroke-width="1.700" fill="none"/><circle cx="465.0" cy="370.2" r="2.300" fill="none" stroke="#3a76c0" stroke-width="1.100"/><circle cx="472.7" cy="370.2" r="2.300" fill="none" stroke="#3a76c0" stroke-width="1.100"/><path d="M461.5 383.5h4.500l2.500 2.500v7.500h-7z" fill="#fff" stroke="#6a6a6a" stroke-width="1"/><path d="M463 386.5h3M463 388.5h3M463 390.5h3" stroke="#3a76c0" stroke-width="1"/><path d="M467.5 386.5h5l3 3v7h-8z" fill="#fff" stroke="#6a6a6a" stroke-width="1"/><path d="M472.5 386.5v3h3" fill="none" stroke="#6a6a6a" stroke-width="1"/><path d="M469 390.5h3M469 392.5h5M469 394.5h5" stroke="#3a76c0" stroke-width="1"/><rect x="462" y="407" width="13" height="13" rx="1" fill="#eac282"/><path d="M464.500 409v-2h2.500v-1.300h3v1.300h2.500v2z" fill="#777"/><path d="M469.500 412.500h4l3 3v5h-7z" fill="#fff" stroke="#666" stroke-width="1"/><path d="M473.500 412.500v3h3" fill="none" stroke="#666" stroke-width="1"/><path d="M488.200 430.500h15.300a1.200 1.200 0 0 1 1.200 1.200v6.600h-3.200v-4.600h-10.900v12.500h6.700v3.400h-9.100a1.200 1.200 0 0 1-1.200-1.200v-16.700a1.200 1.200 0 0 1 1.200-1.200z" fill="#eac282"/><path d="M489.800 433.400v-3h3.700v-1.200a1.400 1.400 0 0 1 1.400-1.400h2a1.400 1.400 0 0 1 1.400 1.400v1.200h3.600v3z" fill="#666"/><rect x="495.100" y="429.200" width="1.600" height="1.400" fill="#fff"/><text x="497.600" y="449.700" font-family="Liberation Sans,sans-serif" font-size="14.5" fill="#444" stroke="#444" stroke-width="0.350">A</text><circle cx="471.200" cy="490.400" r="4.900" fill="#fff" stroke="#2b6cb8" stroke-width="1.700"/><path d="M467.400 494.200l-5.600 5.600" stroke="#2b6cb8" stroke-width="2.600" fill="none"/><rect x="470.400" y="489.700" width="1.700" height="3.600" fill="#2b6cb8"/><rect x="470.400" y="487.100" width="1.700" height="1.700" fill="#2b6cb8"/><path d="M463.500 523.500v-12.500h4.500l3 3v1.500" fill="none" stroke="#b8b8b8" stroke-width="1.100"/><path d="M468 511v3h3" fill="none" stroke="#b8b8b8" stroke-width="1"/><path d="M476 519a4.200 4.200 0 0 0-7.600-1.600M467.700 521a4.200 4.200 0 0 0 7.600 1.600" fill="none" stroke="#b0b0b0" stroke-width="1.400"/><path d="M467.600 515.200v2.800h2.800M476.200 524.800v-2.800h-2.800" fill="none" stroke="#b0b0b0" stroke-width="1.300"/><rect x="465.500" y="636.500" width="10" height="12" fill="#fff" stroke="#b4b4b4" stroke-width="1.200"/><path d="M468 640.500h5.500M468 643h5.500M468 645.500h5.500" stroke="#b4b4b4" stroke-width="1.200"/><path d="M466 633.800l-4.600 6.400h2.800l-2.600 5.200 6.200-7h-3l3.200-4.600z" fill="#bcbcbc" stroke="#fff" stroke-width="0.600"/><path d="M465.5 733.8h9a1 1 0 0 1 1 1v6.500a1 1 0 0 1-1 1h-4.500l-3.500 3.500v-3.500h-1.500a1 1 0 0 1-1-1v-2" fill="none" stroke="#666" stroke-width="1"/><path d="M463.800 731.500v6M460.800 734.500h6" stroke="#2e8b57" stroke-width="1.600" fill="none"/><path d="M465.5 757.8h9a1 1 0 0 1 1 1v6.500a1 1 0 0 1-1 1h-4.500l-3.500 3.500v-3.500h-1.500a1 1 0 0 1-1-1v-2" fill="none" stroke="#666" stroke-width="1"/><path d="M461 755.500l6.500 7M467.500 755.500l-6.500 7" stroke="#d64a20" stroke-width="1.500" fill="none"/><rect x="462.500" y="782.500" width="13" height="15" fill="#fff" stroke="#555" stroke-width="1"/><rect x="462" y="782" width="14" height="2.600" fill="#2b6cb8"/><circle cx="466" cy="788.500" r="1.100" fill="#555"/><circle cx="466" cy="793" r="1.100" fill="none" stroke="#555" stroke-width="0.800"/><path d="M468.500 788.500h4.500M468.500 793h4.500" stroke="#555" stroke-width="1"/><path d="M462.500 838.500a6 6 0 0 1 12 0" fill="none" stroke="#bdbdbd" stroke-width="1.100"/><path d="M462.500 838.500h12M464 835h9M468.500 832.500v6M466 838.500c0-3 1-5 2.500-6M471 838.500c0-3-1-5-2.500-6" fill="none" stroke="#bdbdbd" stroke-width="0.900"/><rect x="462" y="840" width="8.500" height="5" rx="2.500" fill="#fff" stroke="#b4b4b4" stroke-width="1.500"/><rect x="468" y="840" width="8.500" height="5" rx="2.500" fill="none" stroke="#b4b4b4" stroke-width="1.500"/><path d="M739.500 565v-2.500h2M749.500 565v-2.500h-2" fill="none" stroke="#bdbdbd" stroke-width="1"/><rect x="743" y="562" width="3.500" height="5" fill="#d4d4d4"/><path d="M739 568l10.500 8.500M749.500 568l-10.500 8.500" stroke="#bdbdbd" stroke-width="2.100" fill="none"/><path d="M739.500 588.500h-3v2.500M739.500 599.500h-3v-2.500" fill="none" stroke="#555" stroke-width="1"/><rect x="736" y="592.500" width="6" height="3" fill="#a9c6e4"/><path d="M741.800 590.300l9.400 8.400M751.200 590.300l-9.400 8.400" stroke="#d64a20" stroke-width="2.100" fill="none"/></svg>
<svg class="a" style="left:592px;top:566px" width="14" height="23" viewBox="0 0 14 23"><path d="M1.500 1.200v16.200l3.700-3.500 2.900 6.600 2.400-1.100-2.900-6.400h5.100z" fill="#fff" stroke="#000" stroke-width="1" stroke-linejoin="miter"/></svg>
<div class="a" style="left:454px;top:554px;width:278.500px;height:27px;border:4px solid #ee3a3b;border-radius:6px"></div><div class="a" style="left:731px;top:583px;width:158px;height:26px;border:4px solid #ee3a3b;border-radius:6px"></div><div class="a" style="left:0px;top:0px;width:920px;height:1px;background:#cfcaca;"></div>
<div class="a" style="left:0px;top:0px;width:1px;height:859px;background:#cfcaca;"></div>
<div class="a" style="left:919px;top:0px;width:1px;height:859px;background:#d6d6d6;"></div>
<div class="a" style="left:0px;top:858px;width:920px;height:1px;background:#d0d0d0;"></div>
<div class="a" style="left:1px;top:61px;width:1px;height:798px;background:#217346;"></div>
</div></body></html>
